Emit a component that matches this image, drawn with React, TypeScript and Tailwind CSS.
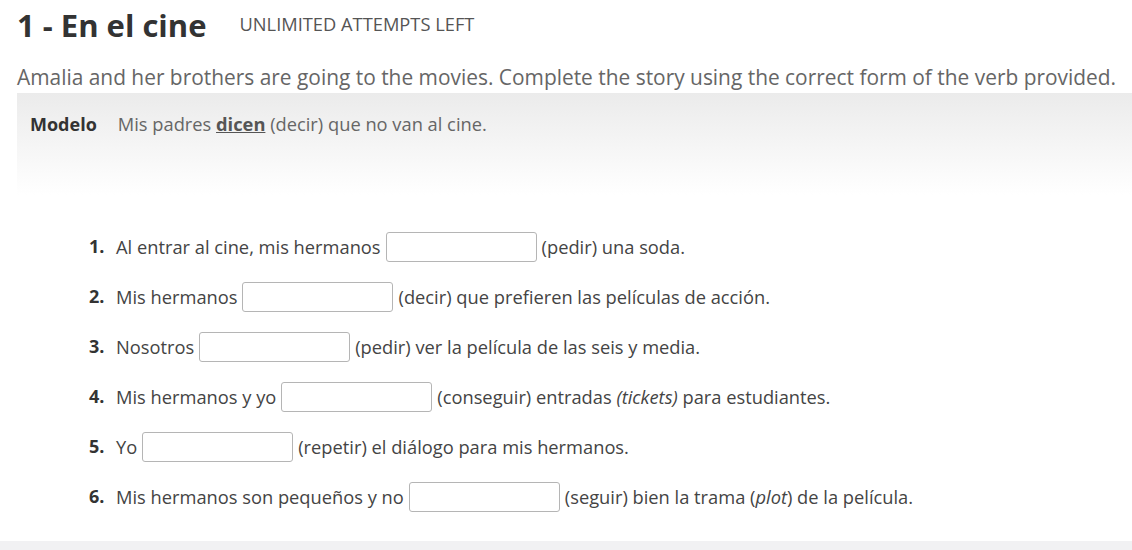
const items: { n: number; before: string; after: React.ReactNode }[] = [
  { n: 1, before: "Al entrar al cine, mis hermanos", after: "(pedir) una soda." },
  { n: 2, before: "Mis hermanos", after: "(decir) que prefieren las películas de acción." },
  { n: 3, before: "Nosotros", after: "(pedir) ver la película de las seis y media." },
  {
    n: 4,
    before: "Mis hermanos y yo",
    after: (
      <>
        (conseguir) entradas <i>(tickets)</i> para estudiantes.
      </>
    ),
  },
  { n: 5, before: "Yo", after: "(repetir) el diálogo para mis hermanos." },
  {
    n: 6,
    before: "Mis hermanos son pequeños y no",
    after: (
      <>
        (seguir) bien la trama (<i>plot</i>) de la película.
      </>
    ),
  },
];

export default function App() {
  return (
    <div
      className="w-[1132px] h-[550px] overflow-hidden bg-white flex flex-col"
      style={{ fontFamily: '"Open Sans", sans-serif' }}
    >
      {/* Header */}
      <div className="flex items-center pl-[17px] pt-[3px]">
        <h1 className="text-[31px] font-bold text-[#333] leading-[44px]">1 - En el cine</h1>
        <span className="ml-[33px] mb-[2px] text-[18.3px] text-[#555]">UNLIMITED ATTEMPTS LEFT</span>
      </div>

      <p className="pl-[17px] mt-[14px] text-[20.9px] text-[#666] leading-[32px] whitespace-nowrap">
        Amalia and her brothers are going to the movies. Complete the story using the correct form of the verb provided.
      </p>

      {/* Modelo */}
      <div className="ml-[17px] h-[102px] bg-gradient-to-b from-[#ebebeb] to-white pl-[13px] pt-[17px]">
        <div className="flex items-baseline text-[18.3px]">
          <span className="font-bold text-[18px] text-[#333]">Modelo</span>
          <span className="ml-[21px] text-[#666]">
            Mis padres <b className="underline text-[#555]">dicen</b> (decir) que no van al cine.
          </span>
        </div>
      </div>

      {/* Items */}
      <ol className="pl-[89px] pt-[36px] flex flex-col gap-[19px] text-[18.3px] text-[#444]">
        {items.map((it) => (
          <li key={it.n} className="flex items-center h-[31px]">
            <span className="font-bold text-[18px] text-[#333] w-[27px]">{it.n}.</span>
            <span>{it.before}</span>
            <input
              className="mx-[5px] w-[151px] h-[30px] border border-[#b5b5b5] rounded-[3px] bg-white"
              type="text"
            />
            <span>{it.after}</span>
          </li>
        ))}
      </ol>

      <div className="mt-auto h-[9px] bg-[#f1f1f3]" />
    </div>
  );
}
